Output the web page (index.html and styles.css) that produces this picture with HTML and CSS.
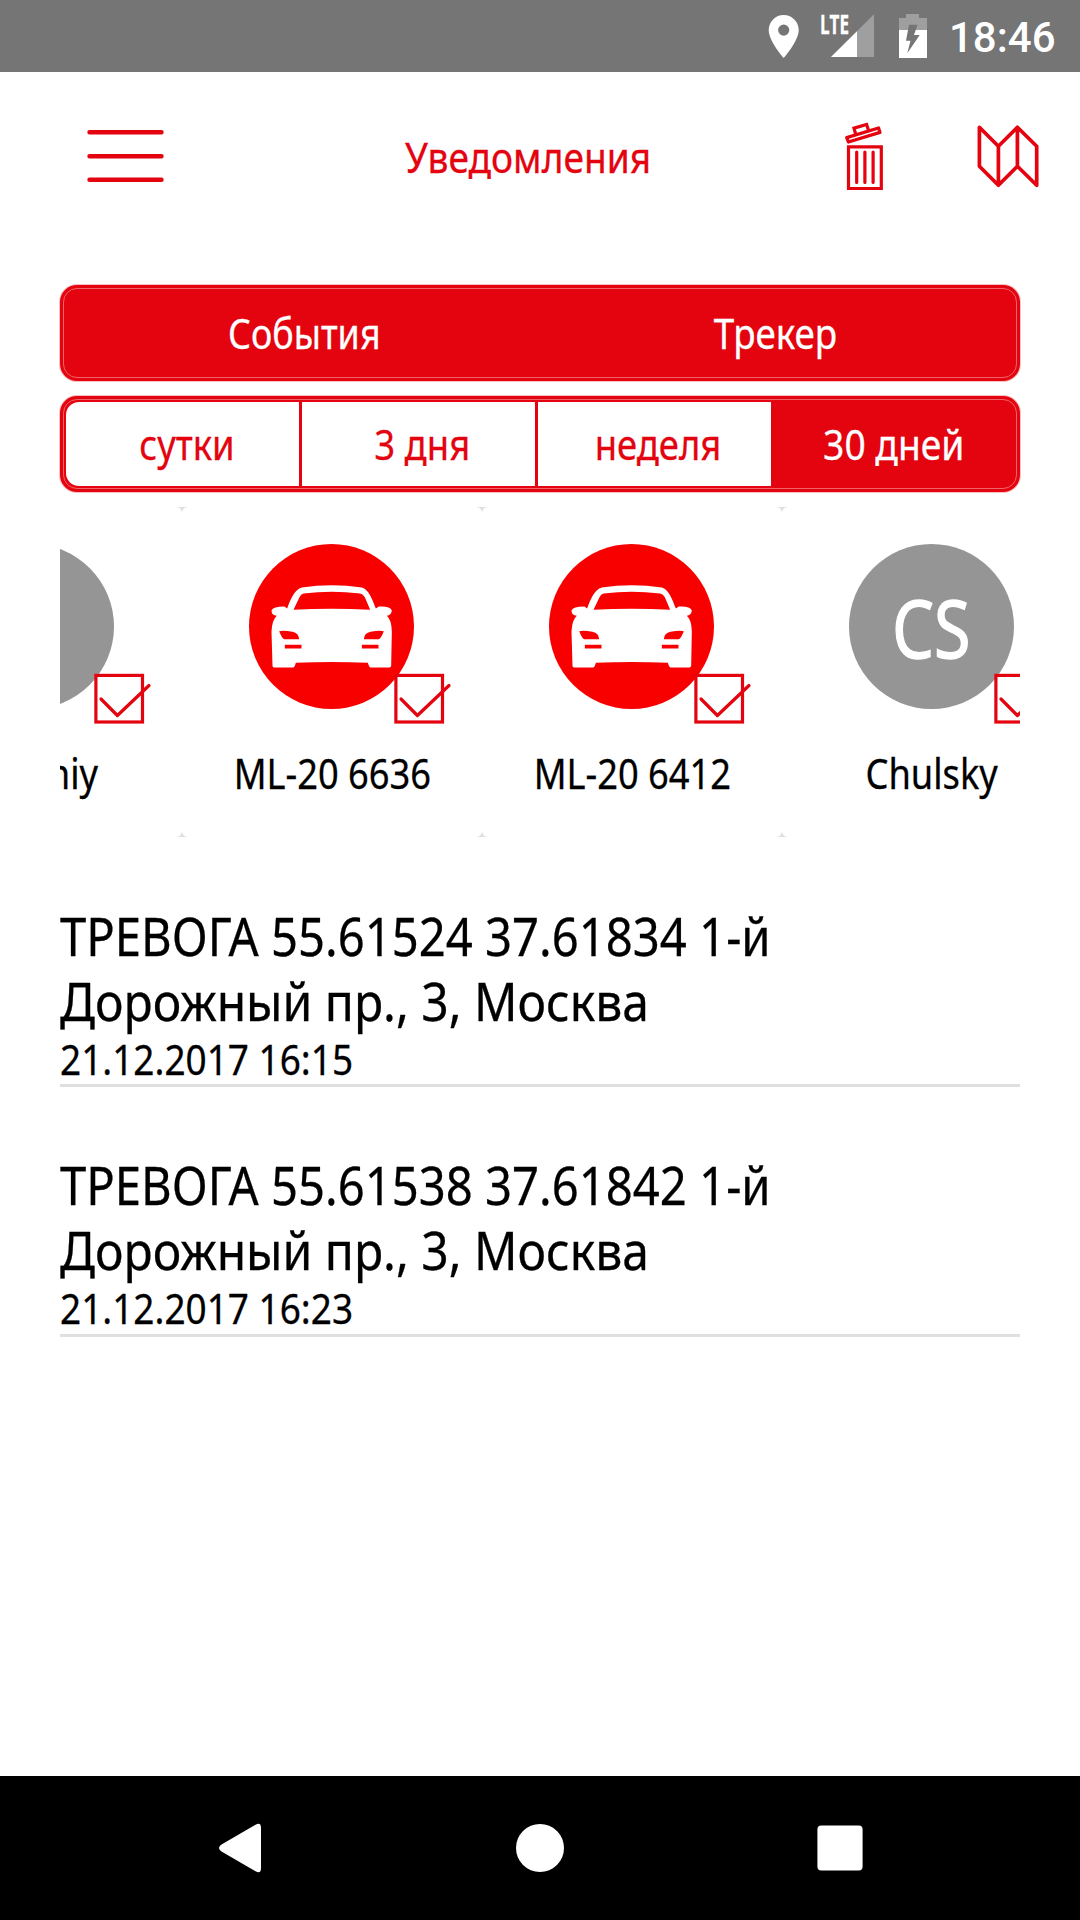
FILE: index.html
```
<!DOCTYPE html>
<html lang="ru">
<head>
<meta charset="utf-8">
<title>Уведомления</title>
<link rel="stylesheet" href="styles.css">
</head>
<body>
<svg class="defs" width="0" height="0" aria-hidden="true">
  <symbol id="car" viewBox="626.5 132.5 495 495">
    <circle cx="874" cy="380" r="247.5" fill="#f90000"/>
    <path fill="#fff" fill-rule="evenodd" d="M741 326C750 300 764 268 785 263Q874 249 965 263C985 268 997 300 1007 326L1016 320Q1050 318 1055 332Q1053 347 1040 348Q1054 360 1055 395L1053 498Q1053 503 1047 503H990Q986 500 983 489Q874 484 767 489Q765 500 760 503H702Q697 503 697 498L694 395Q696 360 710 348Q694 346 694 332Q698 320 733 320ZM760 330Q874 324 990 330L974 292Q969 283 960 281Q874 271 790 281Q782 283 778 292ZM717 394Q730 391 757 396Q776 400 777 418H732Q726 416 717 394ZM1031 394Q1018 391 991 396Q972 400 971 418H1016Q1022 416 1031 394ZM734 435H784V446H734ZM965 435H1015V446H965Z"/>
  </symbol>
  <symbol id="check" viewBox="0 0 58 52">
    <g fill="none" stroke="#e3040f" stroke-width="3.2">
      <rect x="1.900" y="2.400" width="46.600" height="46.600"/>
      <path d="M7 26L23.400 42.500L55 12.500" stroke-linecap="round" stroke-linejoin="round"/>
    </g>
  </symbol>
</svg>
<div class="screen">
  <div class="status-bar">
    <svg width="175" height="72" viewBox="760 0 175 72">
      <path fill="#fff" fill-rule="evenodd" d="M783.7 15a15 15 0 0 0-15 15c0 11.2 15 28 15 28s15-16.8 15-28a15 15 0 0 0-15-15zm0 9.5a5.6 5.6 0 1 1 0 11.2a5.6 5.6 0 0 1 0-11.2z"/>
      <path fill="#9f9f9f" d="M874 14.3V57H831z"/>
      <path fill="#fff" d="M857 31.2V57H831z"/>
      <text class="lte" x="820" y="33.7" textLength="29" lengthAdjust="spacingAndGlyphs">LTE</text>
      <path fill="#9f9f9f" d="M906 14h13v4h8v12h-28V18h7z"/>
      <path fill="#fff" d="M899 30h28v28h-28z"/>
      <path fill="#757575" d="M909 24.7h8.5L914 35h5.7L907.3 53.3L910.5 40.7H906z"/>
    </svg>
    <span class="clock">18:46</span>
  </div>

  <header class="header">
    <svg width="77" height="60" viewBox="87 126 77 60">
      <path d="M89.500 132.300H161.500M89.500 156.200H161.500M89.500 179.700H161.500" stroke="#e3040f" stroke-width="4.4" stroke-linecap="round"/>
    </svg>
    <h1 class="title">Уведомления</h1>
    <svg width="40" height="70" viewBox="844 121 40 70">
      <g fill="none" stroke="#e3040f" stroke-width="3.2">
        <path d="M848.5 146.800H881.300V188.500H848.500Z"/>
        <path d="M856.700 152V182.500M864.900 152V182.500M873.100 152V182.500" stroke-linecap="round"/>
        <path d="M846.700 137.600L878.600 128L880 132.400L848.400 142Z" stroke-linejoin="round"/>
        <path d="M855.600 134L854 128.200L866.600 124.500L868.400 130"/>
      </g>
    </svg>
    <svg class="map" width="63" height="70" viewBox="977 121 63 70">
      <path fill="none" stroke="#e3040f" stroke-width="3.7" stroke-linejoin="round" d="M979.400 127.300L998.400 146.300L1017.400 127.300L1036.700 146.300V185.300L1017.400 166.300L998.400 185.300L979.400 166.300ZM998.400 146.300V185.300M1017.400 127.300V166.300"/>
    </svg>
  </header>

  <main class="content">
    <div class="bar"><div class="bar-inner tabs">
      <div class="tab"><span class="t-events">События</span></div>
      <div class="tab"><span class="t-tracker">Трекер</span></div>
    </div></div>
    <div class="bar"><div class="bar-inner"><div class="periods">
      <div class="period first"><span>сутки</span></div>
      <div class="period"><span>3 дня</span></div>
      <div class="period last-off"><span>неделя</span></div>
      <div class="period active"><span>30 дней</span></div>
    </div></div></div>

    <div class="strip"><div class="track">
      <div class="card">
        <div class="avatar"></div>
        <svg class="check" width="58" height="52"><use href="#check"/></svg>
        <span class="name">Evgeniy</span>
      </div>
      <div class="card">
        <svg class="vehicle" width="165" height="165"><use href="#car"/></svg>
        <svg class="check" width="58" height="52"><use href="#check"/></svg>
        <span class="name">ML-20 6636</span>
      </div>
      <div class="card">
        <svg class="vehicle" width="165" height="165"><use href="#car"/></svg>
        <svg class="check" width="58" height="52"><use href="#check"/></svg>
        <span class="name">ML-20 6412</span>
      </div>
      <div class="card">
        <div class="avatar"><span>CS</span></div>
        <svg class="check" width="58" height="52"><use href="#check"/></svg>
        <span class="name">Chulsky</span>
      </div>
    </div></div>

    <div class="events">
      <article class="event">
        <p class="alarm">ТРЕВОГА 55.61524 37.61834 1-й</p>
        <p class="address">Дорожный пр., 3, Москва</p>
        <time>21.12.2017 16:15</time>
      </article>
      <article class="event">
        <p class="alarm">ТРЕВОГА 55.61538 37.61842 1-й</p>
        <p class="address">Дорожный пр., 3, Москва</p>
        <time>21.12.2017 16:23</time>
      </article>
    </div>
  </main>

  <nav class="nav-bar">
    <svg width="44" height="50" viewBox="218 1823 44 50"><path fill="#fff" d="M255.500 1824.800Q261 1821.500 261 1828V1868Q261 1874.500 255.500 1871.200L221.500 1851.500Q216.500 1848 221.500 1844.500Z"/></svg>
    <svg width="48" height="48" viewBox="0 0 48 48"><circle cx="24" cy="24" r="24" fill="#fff"/></svg>
    <svg width="46" height="46" viewBox="0 0 46 46"><rect x=".4" y=".4" width="45.200" height="45.200" rx="4" fill="#fff"/></svg>
  </nav>
</div>
</body>
</html>
```
FILE: styles.css
```
* { box-sizing: border-box; }
body { margin: 0; background: #fff; }
svg { display: block; flex: none; }
.defs { position: absolute; }

.screen {
  width: 1080px;
  height: 1920px;
  display: flex;
  flex-direction: column;
  overflow: hidden;
  font-family: "Noto Sans", sans-serif;
  font-size: 42px;
  line-height: 60px;
  color: #000;
  -webkit-text-stroke: 0.3px currentColor;
}

.status-bar {
  height: 72px;
  background: #757575;
  display: flex;
  align-items: center;
  padding-left: 760px;
  color: #fff;
  -webkit-text-stroke: 0;
}
.lte { font: bold 26px "Open Sans", sans-serif; fill: #fff; stroke: #fff; stroke-width: 0.4px; }
.clock {
  font: 500 42px/72px Roboto, sans-serif;
  padding: 3px 0 0 14px;
}

.header {
  height: 168px;
  padding-left: 87px;
  display: flex;
  align-items: center;
  color: #e3040f;
}
.title {
  flex: 0 0 439px;
  margin: 1px 0 0 241px;
  font-size: 42px;
  font-weight: 400;
  transform: scaleX(0.884);
  transform-origin: 0 50%;
}
.map { margin-left: 93px; }

.content {
  flex: 1;
  padding: 45px 60px 0;
  display: flex;
  flex-direction: column;
  gap: 15px;
}

/* Segmented bars: solid frame with a hairline inside it */
.bar {
  flex: none;
  height: 96px;
  padding: 3px;
  border-radius: 17px;
  background: #e3040f;
  box-shadow: 0 0 0 1px rgba(227, 4, 15, 0.25);
}
.bar-inner {
  height: 100%;
  border: 1px solid #ee636a;
  border-radius: 14px;
}
.bar span { display: block; white-space: nowrap; }
.tabs {
  display: grid;
  grid-template-columns: 1fr 1fr;
  padding: 0 5px;
}
.tab {
  display: flex;
  align-items: center;
  justify-content: center;
  color: #fff;
}
.t-events { transform: scaleX(0.854); }
.t-tracker { transform: scaleX(0.875); }
.periods {
  height: 100%;
  padding: 2px;
  display: grid;
  grid-template-columns: 236px 236px 233px 243px;
}
.period {
  display: flex;
  align-items: center;
  justify-content: center;
  padding-left: 7px;
  border-right: 3px solid #e3040f;
  background: #fff;
  color: #e3040f;
}
.period span { transform: scaleX(0.868); }
.period.first {
  padding-left: 8px;
  padding-right: 3px;
  border-right: 0;
  border-radius: 13px 0 0 13px;
  box-shadow: inset -3px 0 #e3040f;
}
.period.last-off { border-right: 0; }
.period.active { padding-left: 3px; border: 0; background: none; color: #fff; }
.period.active span { transform: scaleX(0.886); }

.strip {
  flex: none;
  height: 330px;
  overflow: hidden;
}
.track { display: flex; margin-left: -178px; height: 330px; }
.card {
  position: relative;
  flex: 0 0 300px;
  padding-top: 37px;
  display: flex;
  flex-direction: column;
  align-items: center;
  gap: 34px;
}
/* Shadow slivers where rounded neighbouring cards meet */
.card::before, .card::after {
  content: "";
  position: absolute;
  left: -5px;
  width: 10px;
  height: 5px;
  background: #dedede;
}
.card::before { top: 0; clip-path: polygon(0 0, 100% 0, 65% 30%, 50% 100%, 35% 30%); }
.card::after { bottom: 0; clip-path: polygon(0 100%, 100% 100%, 65% 70%, 50% 0, 35% 70%); }
.vehicle, .avatar { margin-right: 1px; }
.avatar {
  width: 165px;
  height: 165px;
  flex: none;
  border-radius: 50%;
  background: #959595;
  display: flex;
  align-items: center;
  justify-content: center;
  color: #fff;
  font-size: 80px;
  -webkit-text-stroke-width: 1.4px;
}
.avatar span { transform: scaleX(0.83); }
.check { position: absolute; left: 212px; top: 166px; }
.name { white-space: nowrap; transform: scaleX(0.863); }

.events {
  margin-top: 51px;
  display: flex;
  flex-direction: column;
  gap: 65px;
}
.event { border-bottom: 3px solid #dfdfdf; height: 185px; }
.event:first-child { height: 184px; }
.event:last-child { padding-top: 1px; margin-top: -1px; height: 186px; }
.event p {
  margin: 0;
  font-size: 53.5px;
  line-height: 65px;
  white-space: nowrap;
  transform-origin: 0 50%;
}
.alarm { transform: scaleX(0.883); }
.address { transform: scaleX(0.897); }
.event time {
  display: block;
  line-height: 51px;
  transform: scaleX(0.88);
  transform-origin: 0 50%;
}

.nav-bar {
  height: 144px;
  padding: 0 217px 0 218px;
  background: #000;
  display: flex;
  align-items: center;
  justify-content: space-between;
}
```
